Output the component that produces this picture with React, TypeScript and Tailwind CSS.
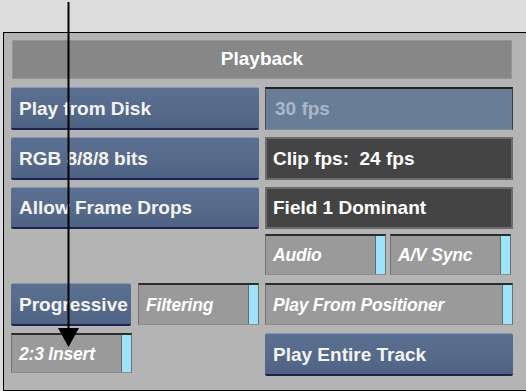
import type { ReactNode } from "react";

const FONT = "font-['Liberation_Sans',Arial,sans-serif]";

function BlueButton({ label, className = "" }: { label: string; className?: string }) {
  return (
    <div
      className={`flex h-full items-center rounded-[2px] border-t border-b-2 border-t-[#8597b3] border-b-[#1d2350] bg-[linear-gradient(180deg,#5b6f90_0%,#55698a_60%,#4e6283_100%)] pl-[8px] pt-[2px] text-[19px] font-bold text-[#f4f4f4] ${className}`}
    >
      {label}
    </div>
  );
}

function DarkField({ label }: { label: string }) {
  return (
    <div className="flex h-full items-center whitespace-pre border-2 border-[#6c6c6c] bg-[#444444] pl-[6px] pt-[1px] text-[19px] font-bold text-white">
      {label}
    </div>
  );
}

function Toggle({ label, className = "" }: { label: string; className?: string }) {
  return (
    <div
      className={`flex h-full border-t-2 border-r border-b border-l border-t-[#2c2c2c] border-r-[#6e6e6e] border-b-[#8e8e8e] border-l-[#727272] bg-[#9a9a9a] ${className}`}
    >
      <div className="flex flex-1 items-center pl-[7px] pt-[1px] text-[17.5px] font-bold italic tracking-[-0.2px] text-white">
        {label}
      </div>
      <div className="w-[10px] border-l border-l-[#6a6a6a] bg-[#9de3fa]" />
    </div>
  );
}

function Row({ left, right, className }: { left: ReactNode; right: ReactNode; className: string }) {
  return (
    <div className={`grid grid-cols-2 gap-x-[6px] ${className}`}>
      <div className="h-full">{left}</div>
      <div className="h-full">{right}</div>
    </div>
  );
}

export default function App() {
  return (
    <div className={`relative h-[391px] w-[526px] overflow-hidden bg-[#dcdcdc] pl-[3px] pt-[32px] ${FONT}`}>
      <div className="flex h-[359px] flex-col border-t border-b border-l border-black bg-[#b4b4b4] pl-[7px] pr-[13px] pt-[7px]">
        <div className="mx-px flex h-[39px] items-center justify-center border border-[#959595] bg-[#878787] text-[19px] font-bold text-white">
          Playback
        </div>

        <Row
          className="mt-[8px] h-[43px]"
          left={<BlueButton label="Play from Disk" />}
          right={
            <div className="flex h-full items-center border-t-2 border-r border-b border-l border-t-[#222222] border-r-[#3c3c3c] border-b-[#7d8a98] border-l-[#4a4a4a] bg-[#687e97] pl-[9px] pt-[1px] text-[19px] font-bold text-[#aab8c7]">
              30 fps
            </div>
          }
        />
        <Row
          className="mt-[7px] h-[43px]"
          left={<BlueButton label="RGB 8/8/8 bits" />}
          right={<DarkField label="Clip fps:  24 fps" />}
        />
        <Row
          className="mt-[7px] h-[42px]"
          left={<BlueButton label="Allow Frame Drops" />}
          right={<DarkField label="Field 1 Dominant" />}
        />
        <Row
          className="mt-[5px] h-[41px]"
          left={<div />}
          right={
            <div className="flex h-full gap-x-[4px]">
              <Toggle label="Audio" className="w-[121px]" />
              <Toggle label="A/V Sync" className="w-[121px]" />
            </div>
          }
        />
        <Row
          className="mt-[8px] h-[43px]"
          left={
            <div className="flex h-full gap-x-[7px]">
              <BlueButton label="Progressive" className="w-[120px] pl-[6px]" />
              <div className="h-[42px] flex-1">
                <Toggle label="Filtering" />
              </div>
            </div>
          }
          right={
            <div className="h-[42px]">
              <Toggle label="Play From Positioner" />
            </div>
          }
        />
        <Row
          className="mt-[7px] h-[43px]"
          left={
            <div className="h-[40px] w-[121px]">
              <Toggle label="2:3 Insert" />
            </div>
          }
          right={<BlueButton label="Play Entire Track" />}
        />
      </div>

      <svg className="pointer-events-none absolute left-0 top-0" width="526" height="391" viewBox="0 0 526 391">
        <line x1="68.5" y1="2" x2="68.5" y2="332" stroke="#000" strokeWidth="2" />
        <polygon points="58,328 79,328 68.5,347" fill="#000" />
      </svg>
    </div>
  );
}
